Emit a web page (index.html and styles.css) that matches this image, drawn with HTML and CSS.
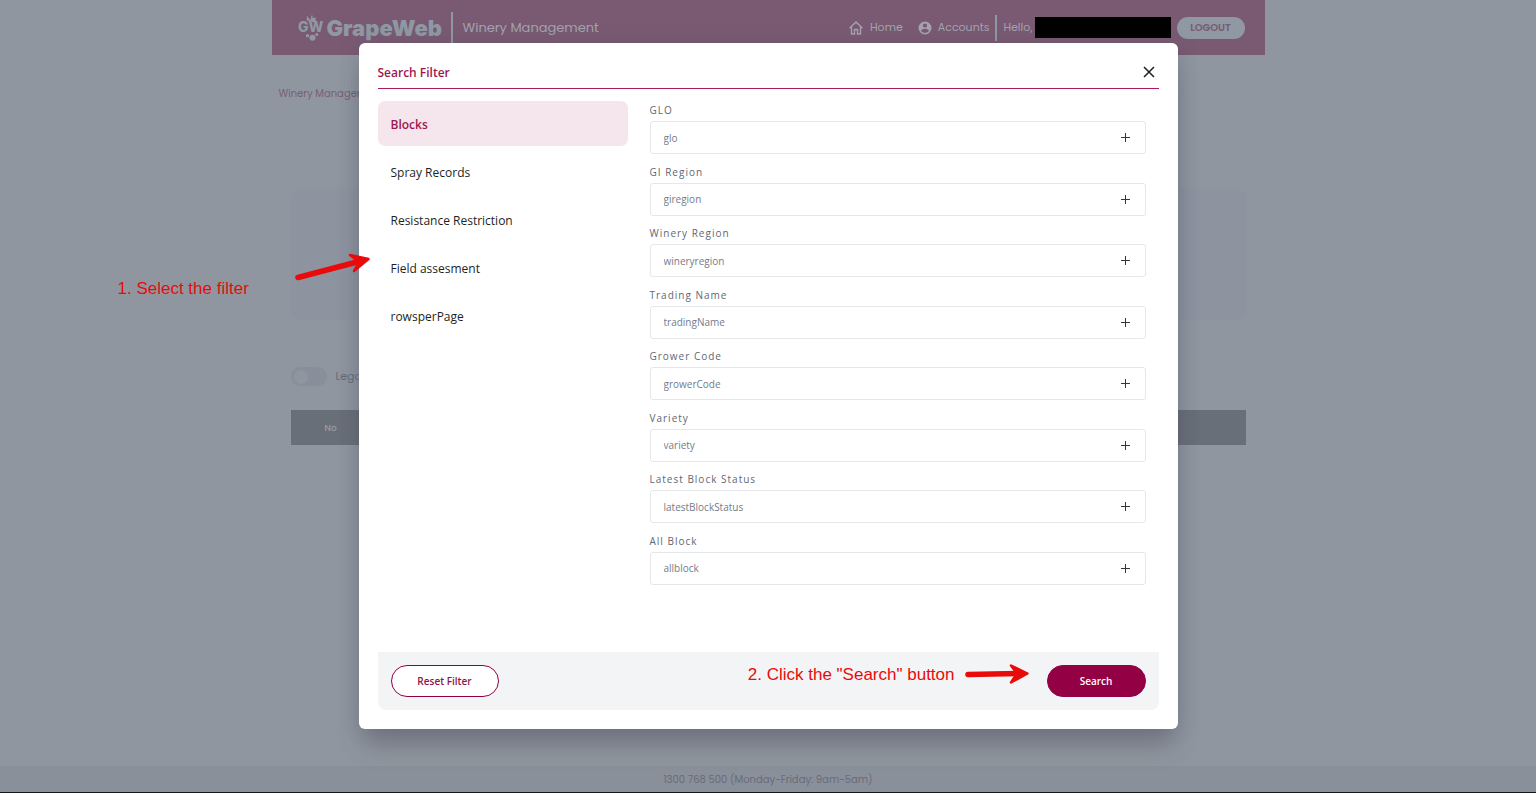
FILE: index.html
```
<!DOCTYPE html>
<html lang="en">
<head>
    <meta charset="UTF-8">
    <meta name="viewport" content="width=device-width, initial-scale=1.0">
    <title>GrapeWeb - Winery Management</title>
    <link rel="stylesheet" href="styles.css">
</head>
<body>
    <header class="topbar">
        <a class="brand" href="#">
            <svg class="brand-mark" viewBox="0 0 26 28" aria-hidden="true">
                <path d="M12 7 L9 2.500 M13 7 L14 1.500 M13 7 L17.500 4" stroke="currentColor" stroke-width="1.300" fill="none"/>
                <circle cx="10" cy="5.500" r="1.400"/>
                <circle cx="15.500" cy="6" r="2.400"/>
                <circle cx="9.500" cy="21.800" r="1.700"/>
                <circle cx="18.800" cy="20.500" r="1.600"/>
                <circle cx="14.500" cy="23.800" r="3"/>
                <text x="0" y="18" class="brand-initials">GW</text>
            </svg>
            <span class="brand-name">GrapeWeb</span>
        </a>
        <span class="topbar-title">Winery Management</span>
        <nav class="topbar-nav">
            <a href="#">
                <svg width="16" height="16" viewBox="0 0 16 16" aria-hidden="true">
                    <path d="M1.500 8.200 L8 2 L14.500 8.200 M3.500 6.800 V14 H6.500 V9.500 H9.500 V14 H12.500 V6.800" fill="none" stroke="currentColor" stroke-width="1.400"/>
                </svg>
                Home
            </a>
            <a href="#">
                <svg width="14" height="14" viewBox="0 0 14 14" aria-hidden="true">
                    <path fill="currentColor" fill-rule="evenodd" d="M7 0.500a6.500 6.500 0 1 0 0 13a6.500 6.500 0 0 0 0-13zM7 2.400a2.100 2.100 0 1 1 0 4.200a2.100 2.100 0 0 1 0-4.200zM7 11.800c-1.700 0-3.100-0.800-3.900-2.100c0-1.300 2.600-2 3.900-2s3.900 0.700 3.900 2c-0.800 1.300-2.200 2.100-3.900 2.100z"/>
                </svg>
                Accounts
            </a>
        </nav>
        <div class="user">
            <span>Hello,</span>
            <span class="user-name"></span>
            <button class="logout" type="button">LOGOUT</button>
        </div>
    </header>

    <main class="page">
        <p class="breadcrumb">Winery Management</p>
        <section class="panel"></section>
        <label class="toggle"><input type="checkbox">Legacy</label>
        <table class="blocks-table">
            <thead>
                <tr><th>No</th></tr>
            </thead>
        </table>
    </main>

    <footer class="page-footer">1300 768 500 (Monday-Friday: 9am-5am)</footer>

    <div class="overlay">
        <div class="modal" role="dialog" aria-labelledby="modal-title">
            <div class="modal-header">
                <h2 id="modal-title">Search Filter</h2>
                <button class="close" type="button" aria-label="Close">
                    <svg width="12" height="12" viewBox="0 0 12 12"><path d="M1 1 L11 11 M11 1 L1 11" stroke="currentColor" stroke-width="1.500"/></svg>
                </button>
            </div>

            <div class="modal-body">
                <nav class="filter-tabs">
                    <button class="tab active" type="button">Blocks</button>
                    <button class="tab" type="button">Spray Records</button>
                    <button class="tab" type="button">Resistance Restriction</button>
                    <button class="tab" type="button">Field assesment</button>
                    <button class="tab" type="button">rowsperPage</button>
                </nav>

                <form class="fields" id="filter-form">
                    <div class="field">
                        <label for="glo">GLO</label>
                        <div class="field-box"><input type="text" id="glo" placeholder="glo"><button class="add" type="button" aria-label="Add"></button></div>
                    </div>
                    <div class="field">
                        <label for="giregion">GI Region</label>
                        <div class="field-box"><input type="text" id="giregion" placeholder="giregion"><button class="add" type="button" aria-label="Add"></button></div>
                    </div>
                    <div class="field">
                        <label for="wineryregion">Winery Region</label>
                        <div class="field-box"><input type="text" id="wineryregion" placeholder="wineryregion"><button class="add" type="button" aria-label="Add"></button></div>
                    </div>
                    <div class="field">
                        <label for="tradingName">Trading Name</label>
                        <div class="field-box"><input type="text" id="tradingName" placeholder="tradingName"><button class="add" type="button" aria-label="Add"></button></div>
                    </div>
                    <div class="field">
                        <label for="growerCode">Grower Code</label>
                        <div class="field-box"><input type="text" id="growerCode" placeholder="growerCode"><button class="add" type="button" aria-label="Add"></button></div>
                    </div>
                    <div class="field">
                        <label for="variety">Variety</label>
                        <div class="field-box"><input type="text" id="variety" placeholder="variety"><button class="add" type="button" aria-label="Add"></button></div>
                    </div>
                    <div class="field">
                        <label for="latestBlockStatus">Latest Block Status</label>
                        <div class="field-box"><input type="text" id="latestBlockStatus" placeholder="latestBlockStatus"><button class="add" type="button" aria-label="Add"></button></div>
                    </div>
                    <div class="field">
                        <label for="allblock">All Block</label>
                        <div class="field-box"><input type="text" id="allblock" placeholder="allblock"><button class="add" type="button" aria-label="Add"></button></div>
                    </div>
                </form>
            </div>

            <div class="modal-footer">
                <button class="btn btn-outline" type="reset" form="filter-form">Reset Filter</button>
                <button class="btn btn-primary" type="submit" form="filter-form">Search</button>
            </div>

            <!-- Help notes -->
            <div class="note note-filter">
                <span>1. Select the filter</span>
                <svg width="76" height="30" viewBox="0 0 76 30" aria-hidden="true">
                    <path d="M3 25.500 L62 10" stroke-width="5.500"/>
                    <path d="M55 3 L73.500 7 L59 19 L64 10 Z" stroke-width="2.500" fill="#e90b0b"/>
                </svg>
            </div>
            <div class="note note-search">
                <span>2. Click the "Search" button</span>
                <svg width="66" height="22" viewBox="0 0 66 22" aria-hidden="true">
                    <path d="M4 11.500 L54 10.500" stroke-width="5.500"/>
                    <path d="M47 2.500 L63.500 10.500 L47 19.500 L53 10.500 Z" stroke-width="2.500" fill="#e90b0b"/>
                </svg>
            </div>
        </div>
    </div>
</body>
</html>
```
FILE: styles.css
```
* {
    box-sizing: border-box;
}
body {
    font-family: 'Poppins', 'Inter', sans-serif;
    font-size: 11px;
    background: #8f969f;
    color: #676c7a;
    margin: 0;
    min-height: 100vh;
    display: flex;
    flex-direction: column;
}
button, input {
    font-family: inherit;
    font-size: inherit;
    color: inherit;
    margin: 0;
}
a {
    color: inherit;
    text-decoration: none;
}

/* Top bar */
.topbar {
    width: 100%;
    max-width: 993px;
    height: 55px;
    margin: 0 auto;
    padding: 0 20px 0 26px;
    background: #795a72;
    color: #a5a3b0;
    display: flex;
    align-items: center;
}
.brand {
    display: flex;
    align-items: center;
    gap: 3px;
    width: 144px;
    color: #8f98a3;
}
.brand-mark {
    flex: none;
    width: 26px;
    height: 28px;
    fill: currentColor;
}
.brand-initials {
    font-family: 'Inter', sans-serif;
    font-weight: 800;
    font-size: 14px;
}
.brand-name {
    font-family: 'Inter', sans-serif;
    font-weight: 900;
    font-size: 22px;
}
.topbar-title {
    font-size: 13px;
    line-height: 32px;
    margin-left: 9px;
    padding-left: 10px;
    border-left: 2px solid #8f98a3;
}
.topbar-nav {
    display: flex;
    gap: 15px;
    margin-left: auto;
    padding-right: 6px;
}
.topbar-nav a {
    display: flex;
    align-items: center;
    gap: 6px;
}
.user {
    display: flex;
    align-items: center;
    border-left: 2px solid #8f98a3;
    padding-left: 6px;
    height: 26px;
}
.user-name {
    width: 136px;
    height: 21px;
    margin: 0 6px 0 2px;
    background: #000;
}
.logout {
    width: 68px;
    height: 22px;
    padding: 0;
    border: none;
    border-radius: 11px;
    background: #8f98a3;
    color: #795a72;
    font-size: 10px;
    font-weight: 600;
}

/* Page behind the dialog */
.page {
    width: 100%;
    max-width: 993px;
    margin: 0 auto;
    padding: 0 19px;
}
.breadcrumb {
    margin: 31px 0 0 -12px;
    font-size: 10px;
    line-height: 16px;
    color: #795f76;
}
.panel {
    height: 132px;
    margin-top: 86px;
    border-radius: 12px;
    background: #8d939f;
}
.toggle {
    display: flex;
    align-items: center;
    gap: 9px;
    margin-top: 46px;
    height: 20px;
}
.toggle input {
    appearance: none;
    width: 36px;
    height: 19px;
    padding: 3px;
    border-radius: 10px;
    background: #888e9a;
}
.toggle input::before {
    content: "";
    display: block;
    width: 14px;
    height: 14px;
    border-radius: 50%;
    background: #8f969f;
}
.blocks-table {
    width: 100%;
    margin-top: 24px;
    border-collapse: collapse;
    background: #696f78;
}
.blocks-table th {
    height: 35px;
    padding: 1px 34px 0;
    text-align: left;
    font-size: 9px;
    font-weight: 500;
    color: #989da6;
}
.page-footer {
    margin-top: auto;
    height: 27px;
    line-height: 28px;
    text-align: center;
    font-size: 10px;
    background: #8a9099;
    border-bottom: 1px solid #14171c;
}

/* Search filter dialog */
.overlay {
    position: absolute;
    inset: 0;
    display: flex;
    justify-content: center;
    align-items: flex-start;
    padding-top: 43px;
}
.modal {
    position: relative;
    width: 100%;
    max-width: 819px;
    padding: 19px;
    border-radius: 6px;
    background: #fff;
    color: #1d1f23;
    font-family: 'Segoe UI', 'Open Sans', sans-serif;
    font-size: 12px;
    box-shadow: 0 20px 25px -5px rgba(60, 60, 75, 0.35), 0 0 20px rgba(70, 70, 95, 0.18);
}
.modal-header {
    display: flex;
    justify-content: space-between;
    align-items: flex-start;
    height: 27px;
    border-bottom: 1px solid #a81b5e;
}
.modal-header h2 {
    margin: 0;
    font-size: 12px;
    line-height: 22px;
    font-weight: 600;
    color: #a01650;
}
.close {
    display: flex;
    padding: 4px;
    border: none;
    background: none;
}
.modal-body {
    display: flex;
    gap: 22px;
    height: 563px;
    padding: 12px 13px 0 0;
}
.filter-tabs {
    flex: none;
    width: 250px;
    display: flex;
    flex-direction: column;
    gap: 3px;
}
.tab {
    height: 45px;
    padding: 2px 13px 0;
    border: none;
    border-radius: 7px;
    background: none;
    text-align: left;
}
.tab.active {
    background: #f5e6ed;
    color: #a01650;
    font-weight: 600;
}
.fields {
    flex: 1;
    display: flex;
    flex-direction: column;
    justify-content: space-between;
    padding-bottom: 67px;
}
.field {
    font-size: 10px;
    color: #606775;
}
.field label {
    display: block;
    height: 20px;
    line-height: 18px;
    letter-spacing: 1px;
}
.field-box {
    display: flex;
    align-items: center;
    height: 33px;
    padding: 0 13px;
    border: 1px solid #e5e7eb;
    border-radius: 3px;
}
.field-box input {
    flex: 1;
    padding: 0;
    border: none;
    outline: none;
    background: none;
}
.field-box input::placeholder {
    color: #757b88;
}
.add {
    width: 13px;
    height: 13px;
    padding: 0;
    border: none;
    background:
        linear-gradient(#33363b, #33363b) center / 9px 1px no-repeat,
        linear-gradient(#33363b, #33363b) center / 1px 9px no-repeat;
}
.modal-footer {
    display: flex;
    justify-content: space-between;
    padding: 13px;
    border-radius: 0 0 8px 8px;
    background: #f3f4f6;
}
.btn {
    height: 32px;
    padding: 0;
    border: 1px solid #940044;
    border-radius: 16px;
    font-size: 10px;
    font-weight: 600;
}
.btn-outline {
    width: 108px;
    background: #fff;
    color: #8f1248;
}
.btn-primary {
    width: 99px;
    background: #940044;
    color: #fff;
}

/* Help notes lie over the dialog and the page */
.note {
    position: absolute;
    display: flex;
    font-family: 'Liberation Sans', Arial, sans-serif;
    font-size: 17px;
    line-height: 20px;
    color: #e90b0b;
    white-space: nowrap;
}
.note svg {
    fill: none;
    stroke: #e90b0b;
    stroke-linecap: round;
    stroke-linejoin: round;
}
.note-filter {
    left: -241px;
    top: 209px;
    gap: 46px;
    align-items: flex-start;
}
.note-filter span {
    margin-top: 27px;
}
.note-search {
    right: 148px;
    bottom: 44px;
    gap: 9px;
    align-items: flex-end;
}
```
